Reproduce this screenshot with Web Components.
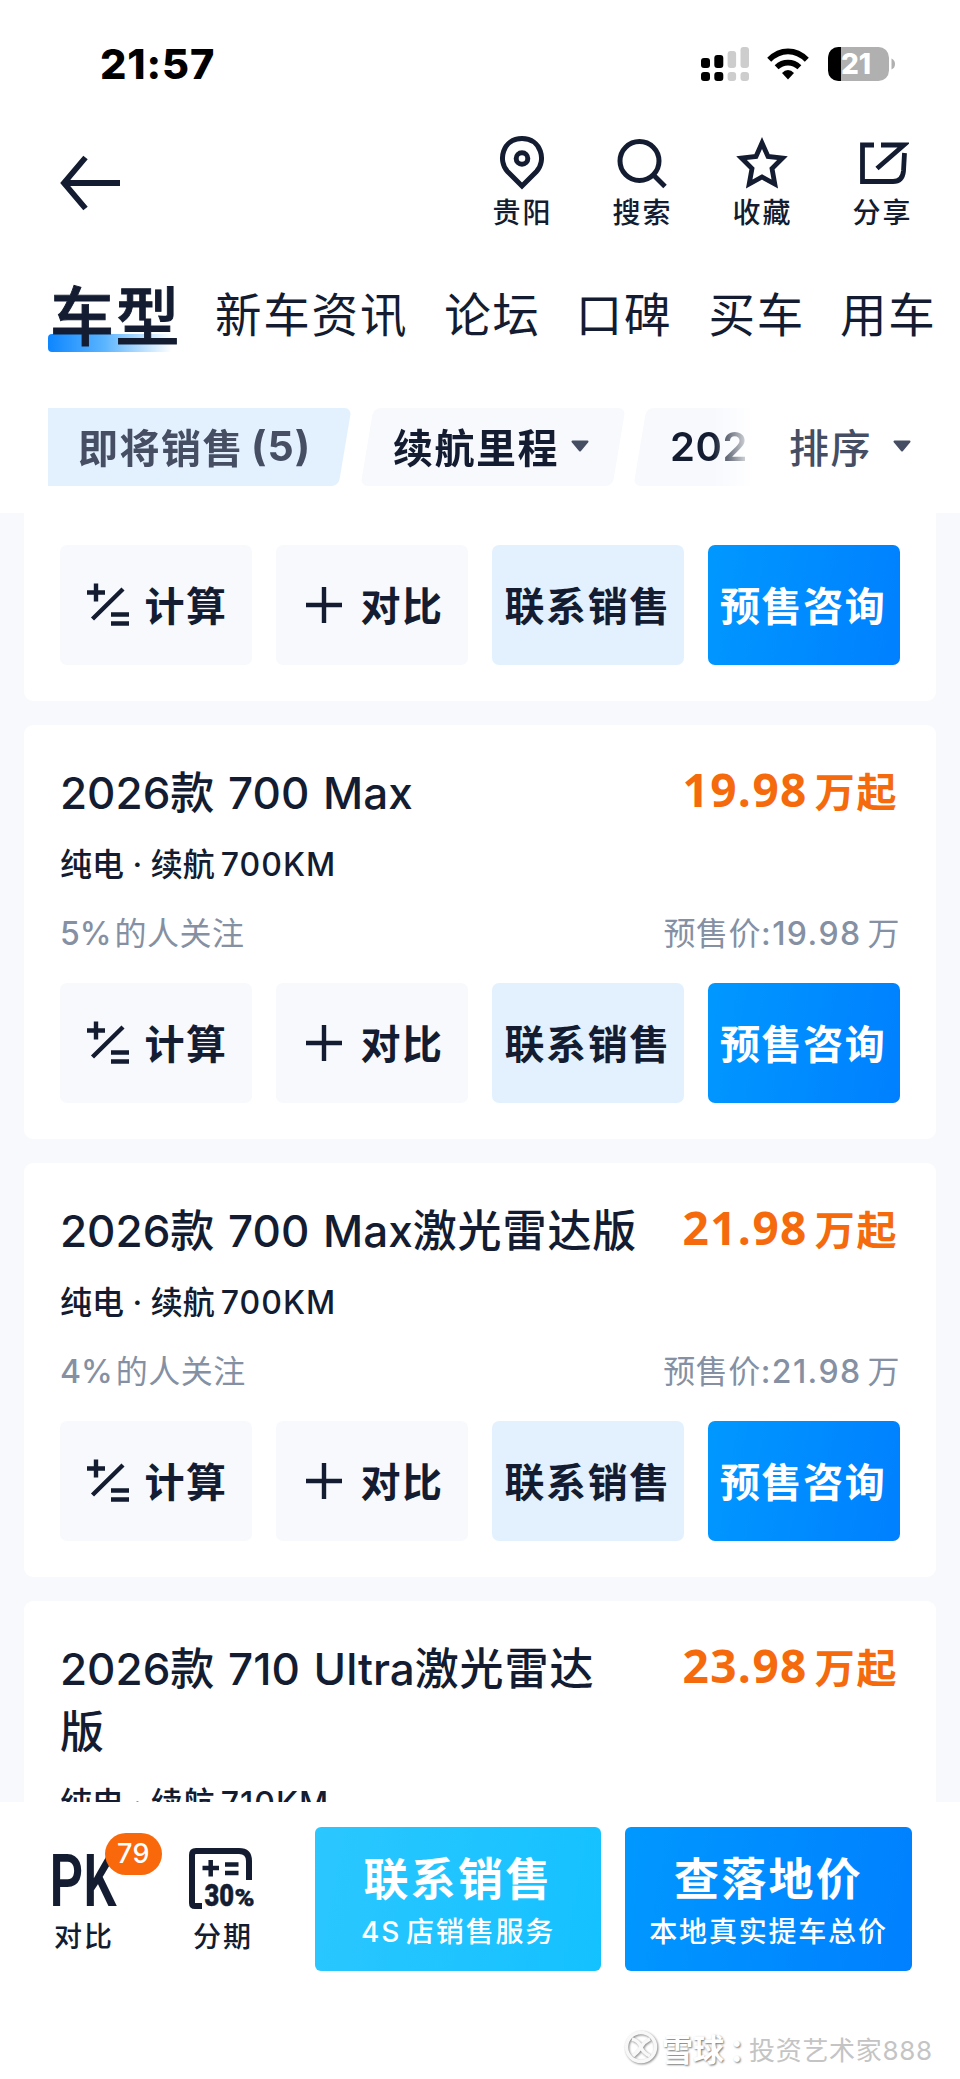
<!DOCTYPE html>
<html lang="zh-CN">
<head>
<meta charset="utf-8">
<title>车型</title>
<style>
html,body{margin:0;padding:0;background:#fff}
body{width:960px;height:2079px;overflow:hidden;font-family:Inter,"Noto Sans CJK SC",sans-serif;color:#131c31}
</style>
</head>
<body>
<app-screen></app-screen>
<script>
const define = (name, html, setup) => {
  const template = document.createElement('template');
  template.innerHTML = `<style>*{box-sizing:border-box}svg{display:block;flex:none}</style>${html}`;
  customElements.define(name, class extends HTMLElement {
    constructor() {
      super();
      this.attachShadow({ mode: 'open' }).append(template.content.cloneNode(true));
    }
    connectedCallback() { if (setup) setup(this, this.shadowRoot); }
  });
};

define('status-bar', `
<style>
:host{display:flex;height:128px;padding:0 65px 0 100px;justify-content:space-between;color:#000}
.time{font-size:41.500px;font-weight:800;line-height:50px;margin-top:39px;letter-spacing:.9px}
.icons{display:flex;margin-top:45px;height:38px;align-items:center}
.bat{position:relative;margin-left:19px;width:67px;height:34px}
.bat span{position:absolute;left:0;top:0;width:61px;height:34px;line-height:34px;padding-left:13px;font-weight:800;font-size:28px;color:#fff;letter-spacing:0}
</style>
<div class="time">21:57</div>
<div class="icons">
<svg width="48" height="36" viewBox="0 0 48 36"><g><rect x="0" y="12" width="9" height="10" rx="3"/><rect x="13.3" y="9" width="9" height="13" rx="3"/><rect x="0" y="26" width="9" height="9" rx="3"/><rect x="13.3" y="26" width="9" height="9" rx="3"/></g><g fill="#cdcdcd"><rect x="26.6" y="5" width="8.5" height="17" rx="3"/><rect x="39.5" y="1" width="8.5" height="21" rx="3"/><rect x="26.6" y="26" width="8.5" height="9" rx="3"/><rect x="39.5" y="26" width="8.5" height="9" rx="3"/></g></svg>
<svg style="margin-left:18px" width="42" height="32" viewBox="0 0 42 32"><g fill="none" stroke="#000" stroke-width="5.6"><path d="M2.2 11.8Q10.5 3.4 21 3.4T39.8 11.8"/><path d="M9.6 19.2Q14.5 14.6 21 14.6T32.400 19.2"/></g><path d="M15 25Q17.800 22 21 22T27 25L21 31.500Z"/></svg>
<div class="bat"><svg width="67" height="34" viewBox="0 0 67 34"><defs><clipPath id="c"><rect width="61" height="34" rx="10.500"/></clipPath></defs><g clip-path="url(#c)"><rect width="61" height="34" fill="#b0b0b0"/><rect width="13" height="34"/></g><path d="M63.500 11.500Q67 13 67 17T63.500 22.500Z" fill="#b0b0b0"/></svg><span>21</span></div>
</div>`);

define('nav-action', `
<style>
:host{display:flex;flex-direction:column;align-items:center;width:120px}
.i{height:62px}
.l{font-size:28px;font-weight:500;line-height:34px;letter-spacing:2px;margin-left:1px}
</style>
<div class="i"><slot name="icon"></slot></div><div class="l"><slot></slot></div>`);

define('nav-bar', `
<style>
:host{display:flex;height:134px;padding:0 18px 0 60px;justify-content:space-between}
.back{margin-top:26px}
.acts{display:flex;margin-top:6px}
</style>
<svg class="back" width="62" height="58" viewBox="0 0 62 58" fill="none" stroke="#131c31" stroke-width="5.800"><path d="M60 29H4M25.500 3.500L4 29L25.500 54.500"/></svg>
<div class="acts">
<nav-action><svg slot="icon" width="54" height="60" viewBox="0 0 54 60" fill="none" stroke="#131c31" stroke-width="5"><path d="M27 52L12.500 37.500C2.500 27 7.500 4.500 27 4.500S51.500 27 41.500 37.500Z" /><circle cx="27" cy="24.500" r="5.800"/></svg>贵阳</nav-action>
<nav-action><svg slot="icon" width="54" height="60" viewBox="0 0 54 60" fill="none" stroke="#131c31" stroke-width="5"><circle cx="24.500" cy="27" r="19.500"/><path d="M38.500 41L50 52.500"/></svg>搜索</nav-action>
<nav-action><svg slot="icon" width="54" height="60" viewBox="0 0 54 60" fill="none" stroke="#131c31" stroke-width="4.800"><path d="M27 9L33 22.500L47.500 24L37 34.500L39.800 50L27 43L14.200 50L17 34.500L6.500 24L21 22.500Z"/></svg>收藏</nav-action>
<nav-action><svg slot="icon" width="54" height="60" viewBox="0 0 54 60" fill="none" stroke="#131c31" stroke-width="4.800"><path d="M19 11H7.500V47.500H38Q47.500 47.500 48.500 37L49.500 19M26 11H49L22 34.500"/></svg>分享</nav-action>
</div>`);

define('tab-strip', `
<style>
:host{display:flex;height:120px;padding-left:48px;white-space:nowrap}
.on{position:relative;width:130px;height:108px;padding-left:2px;font-size:64px;line-height:109px;font-weight:500;letter-spacing:1.500px}
.on::before{content:"";position:absolute;left:0;top:72px;width:124px;height:18px;border-radius:4px;background:linear-gradient(90deg,#0d86ff,#5ab4ff 45%,#fff0)}
.on span{position:relative;-webkit-text-stroke:.9px #131c31}
.t{font-size:46.500px;font-weight:400;letter-spacing:1.800px;line-height:106px}
</style>
<div class="on"><span>车型</span></div>
<div class="t" style="margin-left:37px">新车资讯</div><div class="t" style="margin-left:36px">论坛</div><div class="t" style="margin-left:35px">口碑</div><div class="t" style="margin-left:36px">买车</div><div class="t" style="margin-left:35px">用车</div>`);

define('filter-chip', `
<style>
:host{display:flex;align-items:center;position:relative;height:78px;flex:none;font-size:40px;font-weight:700;letter-spacing:1.500px;white-space:nowrap}
.bg{position:absolute;inset:0;background:#f7f9fd;border-radius:7px;transform:skewX(-9.500deg)}
:host([active]){color:#454e63;overflow:hidden}
:host([active]) .bg{left:-30px;right:6px;background:#e3f1ff}
span{position:relative;display:flex;align-items:center;top:-1px}
</style>
<div class="bg"></div><span><slot></slot></span>`);

define('filter-bar', `
<style>
:host{display:flex;height:131px;padding:26px 0 0 48px;align-items:flex-start}
.scroll{display:flex;width:702px;overflow:hidden;height:80px;-webkit-mask-image:linear-gradient(90deg,#000 665px,transparent 706px);mask-image:linear-gradient(90deg,#000 665px,transparent 706px)}
.sort{display:flex;align-items:center;height:76px;margin-left:39px;font-size:40px;font-weight:500;letter-spacing:1.500px;color:#454e63}
b{font-size:41px;font-weight:700;margin-left:7px;letter-spacing:1px}
</style>
<div class="scroll">
<filter-chip active style="width:303px;padding-left:30px">即将销售<b>(5)</b></filter-chip>
<filter-chip style="width:252px;margin-left:16px;padding-left:26px">续航里程<svg style="margin-left:11px" width="20" height="13" viewBox="0 0 20 13"><path d="M2.500 1.500H17.500L10 10.500Z" fill="#454e63" stroke="#454e63" stroke-width="2" stroke-linejoin="round"/></svg></filter-chip>
<filter-chip style="width:240px;margin-left:21px;padding-left:30px;font-weight:600;letter-spacing:.6px">202</filter-chip>
</div>
<div class="sort">排序<svg style="margin-left:20px" width="20" height="13" viewBox="0 0 20 13"><path d="M2.500 1.500H17.500L10 10.500Z" fill="#454e63" stroke="#454e63" stroke-width="2" stroke-linejoin="round"/></svg></div>`);

define('card-actions', `
<style>
:host{display:grid;grid-template-columns:repeat(4,192px);gap:24px}
.b{display:flex;align-items:center;height:120px;padding-bottom:2px;border-radius:7px;font-size:40px;font-weight:700;letter-spacing:1.600px;white-space:nowrap;background:#f7f9fd}
.c{background:#e3f1ff;padding-left:12.500px}
.d{background:linear-gradient(100deg,#0098ff,#0080ff);color:#fff;padding-left:12px}
</style>
<div class="b" style="padding-left:26px"><svg style="margin-right:15.500px" width="43" height="44" viewBox="0 0 43 44" fill="none" stroke="#131c31" stroke-width="4.400"><path d="M1 10.500H19M10 1.500V19.500M6.500 37L37 7M25 32.500H43M25 41.500H43" /></svg>计算</div>
<div class="b" style="padding-left:29px"><svg style="margin-right:17.500px;margin-top:2px" width="38" height="38" viewBox="0 0 38 38" fill="none" stroke="#131c31" stroke-width="4.400"><path d="M1 19H37M19 1V37"/></svg>对比</div>
<div class="b c">联系销售</div>
<div class="b d">预售咨询</div>`);

define('model-card', `
<style>
:host{display:block;background:#fff;border-radius:9px;padding:37px 36px 36px;flex:none}
.top,.meta{display:flex;justify-content:space-between}
.name{width:var(--name-width,590px);font-size:44px;font-weight:500;line-height:63px;letter-spacing:0;word-spacing:2px}
.name b{font-weight:500;letter-spacing:.9px}
.price{display:flex;align-items:baseline;line-height:58px;color:#f56a0c;white-space:nowrap;height:58px}
.num{font:700 46px/54px "Open Sans",sans-serif;letter-spacing:1.400px}
.unit{font-size:40px;font-weight:700;letter-spacing:1.600px;margin-left:7px;margin-right:2px}
.spec{font-size:32px;font-weight:500;line-height:40px;margin-top:20px;white-space:nowrap}
.spec b{font-weight:500;letter-spacing:1px;margin-left:6px}
.meta{font-size:32px;line-height:40px;margin-top:29px;color:#8590a3;letter-spacing:.5px}
.meta b{font-weight:500;letter-spacing:1.400px}
.fans b{letter-spacing:0;margin-right:3px}
.pre b{margin-right:6px}
card-actions{margin-top:29px}
</style>
<div class="top"><div class="name"></div><div class="price"><span class="num"></span><span class="unit">万起</span></div></div>
<div class="spec"></div>
<div class="meta"><span class="fans"></span><span class="pre"></span></div>
<card-actions></card-actions>`, (el, root) => {
  const a = n => el.getAttribute(n);
  root.querySelector('.name').innerHTML = a('name').replace('激光雷达版', '<b>激光雷达版</b>');
  root.querySelector('.num').textContent = a('price');
  root.querySelector('.spec').innerHTML = `纯电 · 续航<b>${a('range')}KM</b>`;
  root.querySelector('.fans').innerHTML = `<b>${a('fans')}%</b>的人关注`;
  root.querySelector('.pre').innerHTML = `预售价<b>:${a('price')}</b>万`;
});

define('model-list', `
<style>
:host{display:flex;flex-direction:column;gap:24px;height:1289px;overflow:hidden;padding:0 24px;background:#f7f9fd}
.cut{background:#fff;border-radius:0 0 9px 9px;padding:32px 36px 36px;height:188px;flex:none}
</style>
<div class="cut"><card-actions></card-actions></div>
<model-card name="2026款 700 Max" price="19.98" range="700" fans="5"></model-card>
<model-card name="2026款 700 Max激光雷达版" price="21.98" range="700" fans="4"></model-card>
<model-card style="--name-width:560px" name="2026款 710 Ultra激光雷达版" price="23.98" range="710" fans="3"></model-card>`);

define('cta-button', `
<style>
:host{display:flex;flex-direction:column;align-items:center;height:144px;width:286px;border-radius:6px;color:#fff;padding-top:24px;white-space:nowrap}
.a{font-size:45px;font-weight:700;letter-spacing:2.300px;line-height:58px}
.b{font-size:28px;font-weight:500;letter-spacing:1.800px;line-height:34px;margin-top:6px}
</style>
<div class="a"><slot></slot></div><div class="b"><slot name="sub"></slot></div>`);

define('bottom-bar', `
<style>
:host{display:flex;height:277px;padding:25px 47px 0 48px;background:#fff;align-items:flex-start}
.tool{position:relative;height:144px}
.lab{font-size:28px;font-weight:500;line-height:34px;letter-spacing:2px}
.badge{position:absolute;left:57px;top:6px;width:57px;height:42px;border-radius:21px;background:#f9680a;color:#fff;font-size:27px;font-weight:500;line-height:41px;text-align:center;letter-spacing:.5px}
</style>
<div class="tool" style="width:141px"><svg width="72" height="93" viewBox="0 0 72 93" fill="#131c31"><text x="1.500" y="79" font-family="Roboto" font-weight="600" font-size="72" textLength="67" lengthAdjust="spacingAndGlyphs">PK</text></svg><div class="lab" style="margin-left:6px">对比</div><div class="badge">79</div></div>
<div class="tool" style="width:126px"><svg width="70" height="93" viewBox="0 0 70 93"><path d="M13 79H6Q3 79 3 76V28Q3 24 7 24H50Q60 24 60 34V53" fill="none" stroke="#131c31" stroke-width="6"/><path d="M13.500 41H30M21.700 33V49.500M36 37.500H49.500M36 46H49.500" fill="none" stroke="#131c31" stroke-width="4.500"/><g fill="#131c31" stroke="#131c31" stroke-width=".5" font-family="Roboto" font-weight="900"><text x="15.500" y="79" font-size="31" textLength="29.500" lengthAdjust="spacingAndGlyphs">30</text><text x="45.500" y="79" font-size="24" textLength="20" lengthAdjust="spacingAndGlyphs">%</text></g></svg><div class="lab" style="margin-left:4px">分期</div></div>
<cta-button style="background:linear-gradient(100deg,#2bc7ff,#14c1ff)">联系销售<span slot="sub">4S<span style="margin-left:5px">店销售服务</span></span></cta-button>
<cta-button style="margin-left:24px;width:287px;background:linear-gradient(100deg,#0098ff,#0080ff)">查落地价<span slot="sub">本地真实提车总价</span></cta-button>`);

define('water-mark', `
<style>
:host{position:absolute;left:624px;top:2028px;display:flex;align-items:center;height:38px;white-space:nowrap}
.brand{font-size:31px;font-weight:700;color:#fff;margin-left:3px;text-shadow:1px 1px 2px #777}
.user{font-size:26px;color:#c4c4c4;text-shadow:-1px -1px 1px #fff;letter-spacing:.7px;margin-left:-6px;padding-top:2px}
svg{filter:drop-shadow(1px 1px 1px #888)}
</style>
<svg width="35" height="35" viewBox="0 0 35 35" fill="none" stroke="#f8f8f8" stroke-width="3.500"><circle cx="17" cy="17" r="14.500"/><path d="M8 9Q15 11 17 17T26 26M26 9Q20 12 17 17T9 26"/></svg>
<span class="brand">雪球<span style="margin-left:5px;margin-right:-5px">：</span></span><span class="user">投资艺术家888</span>`);

define('app-screen', `
<style>:host{display:flex;flex-direction:column;position:relative;width:960px;height:2079px;overflow:hidden;background:#fff}</style>
<status-bar></status-bar><nav-bar></nav-bar><tab-strip></tab-strip><filter-bar></filter-bar><model-list></model-list><bottom-bar></bottom-bar><water-mark></water-mark>`);
</script>
</body>
</html>
